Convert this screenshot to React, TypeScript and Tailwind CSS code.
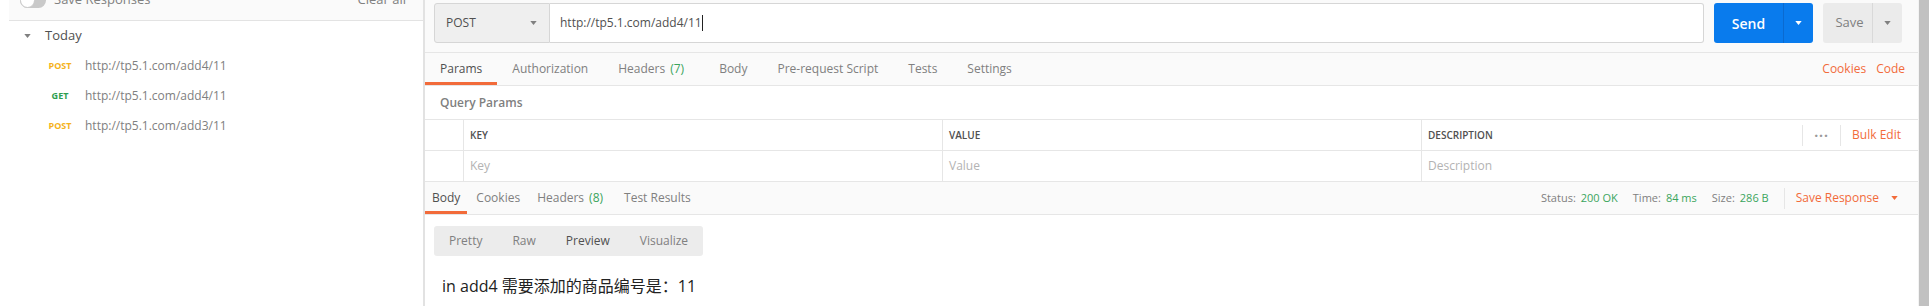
import React from "react";

const Caret = ({ color = "#808080", w = 8, h = 5 }: { color?: string; w?: number; h?: number }) => (
  <svg width={w} height={h} viewBox="0 0 8 5" className="shrink-0">
    <path d="M0 0 L8 0 L4 5 Z" fill={color} />
  </svg>
);

function Sidebar() {
  const items = [
    { m: "POST", c: "text-[#f5b21b]", u: "http://tp5.1.com/add4/11" },
    { m: "GET", c: "text-[#2e9e50]", u: "http://tp5.1.com/add4/11" },
    { m: "POST", c: "text-[#f5b21b]", u: "http://tp5.1.com/add3/11" },
  ];
  return (
    <div className="w-[425px] shrink-0 h-full border-r-2 border-[#e2e2e2] bg-white flex flex-col">
      <div className="ml-[9px] w-[414px] -mt-[20px] h-[41px] shrink-0 bg-[#fafafa] border-b border-[#e3e3e3] flex items-center pl-[11px] pr-[17px] text-[13px] text-[#808080]">
        <div className="w-[26px] h-[15px] rounded-full bg-[#c9c9c9] relative">
          <div className="absolute left-0 top-0 w-[15px] h-[15px] rounded-full bg-white border border-[#c9c9c9]" />
        </div>
        <span className="ml-[8px]">Save Responses</span>
        <span className="ml-auto">Clear all</span>
      </div>
      <div className="h-[30px] flex items-center pl-[24px] text-[13px] text-[#505050]">
        <Caret w={7} h={4} />
        <span className="ml-[14px]">Today</span>
      </div>
      {items.map((it, i) => (
        <div key={i} className="h-[30px] flex items-center pl-[42px]">
          <span className={`w-[36px] text-center text-[9px] font-bold ${it.c}`}>{it.m}</span>
          <span className="ml-[7px] text-[12px] text-[#808080]">{it.u}</span>
        </div>
      ))}
    </div>
  );
}

function Main() {
  const reqTabs = [
    { t: "Params", active: true },
    { t: "Authorization" },
    { t: "Headers", n: "(7)" },
    { t: "Body" },
    { t: "Pre-request Script" },
    { t: "Tests" },
    { t: "Settings" },
  ];
  return (
    <div className="flex-1 min-w-0 h-full flex flex-col">
      {/* URL bar */}
      <div className="h-[53px] shrink-0 bg-[#fafafa] border-b border-[#e6e6e6] flex items-start pt-[3px] pl-[9px] pr-[16px]">
        <div className="w-[116px] h-[40px] bg-[#efefef] border border-[#d6d6d6] rounded-l-[3px] flex items-center justify-between pl-[11px] pr-[12px] text-[12px] text-[#505050]">
          <span>POST</span>
          <Caret w={7} h={4} />
        </div>
        <div className="flex-1 h-[40px] bg-white border border-l-0 border-[#d6d6d6] rounded-r-[3px] flex items-center pl-[10px] text-[12px] text-[#505050]">
          <span>http://tp5.1.com/add4/11</span>
          <span className="w-[1px] h-[16px] bg-[#222]" />
        </div>
        <div className="ml-[10px] w-[99px] h-[40px] rounded-[3px] bg-[#097bed] flex">
          <div className="w-[69px] flex items-center justify-center text-[14px] font-semibold text-white">Send</div>
          <div className="flex-1 border-l border-[#0a6ad0] flex items-center justify-center">
            <Caret color="#ffffff" w={7} h={4} />
          </div>
        </div>
        <div className="ml-[10px] w-[79px] h-[40px] rounded-[3px] bg-[#ebebeb] flex">
          <div className="w-[49px] flex items-center justify-center pl-[4px] text-[13px] text-[#808080]">Save</div>
          <div className="flex-1 border-l border-[#d9d9d9] flex items-center justify-center">
            <Caret color="#808080" w={7} h={4} />
          </div>
        </div>
      </div>

      {/* Request tabs */}
      <div className="h-[33px] shrink-0 bg-[#fafafa] border-b border-[#e6e6e6] flex items-stretch text-[12px]">
        {reqTabs.map((tb) => (
          <div
            key={tb.t}
            className={`flex items-center px-[15px] border-b-[3px] pt-[3px] ${
              tb.active ? "border-[#f26b3a] text-[#505050]" : "border-transparent text-[#808080]"
            } ${tb.t === "Headers" ? "pr-[20px]" : ""}`}
          >
            {tb.t}
            {tb.n && <span className="ml-[5px] text-[#3aa55d]">{tb.n}</span>}
          </div>
        ))}
        <div className="ml-auto flex items-center pr-[13px] text-[#f26b3a] gap-[10px]">
          <span>Cookies</span>
          <span>Code</span>
        </div>
      </div>

      {/* Query Params */}
      <div className="h-[33px] shrink-0 flex items-center pl-[15px] text-[12px] font-semibold text-[#808080]">
        Query Params
      </div>

      {/* Table */}
      <div className="border-t border-[#e6e6e6] shrink-0">
        <div className="h-[31px] flex border-b border-[#e6e6e6] text-[10px] font-semibold text-[#505050]">
          <div className="w-[39px] border-r border-[#e6e6e6]" />
          <div className="w-[479px] border-r border-[#e6e6e6] flex items-center pl-[6px]">KEY</div>
          <div className="w-[479px] border-r border-[#e6e6e6] flex items-center pl-[6px]">VALUE</div>
          <div className="flex-1 flex items-center pl-[6px]">
            <span>DESCRIPTION</span>
            <div className="ml-auto h-[21px] border-l border-[#e6e6e6] flex items-center px-[11px] text-[#9a9a9a] text-[14px] font-bold tracking-[1px] leading-none">
              <span className="-mt-[6px]">...</span>
            </div>
            <div className="h-[21px] border-l border-[#e6e6e6] flex items-center pl-[11px] pr-[17px] text-[12px] font-normal text-[#f26b3a]">
              Bulk Edit
            </div>
          </div>
        </div>
        <div className="h-[31px] flex border-b border-[#e6e6e6] text-[12px] text-[#b3b3b3]">
          <div className="w-[39px] border-r border-[#e6e6e6]" />
          <div className="w-[479px] border-r border-[#e6e6e6] flex items-center pl-[6px]">Key</div>
          <div className="w-[479px] border-r border-[#e6e6e6] flex items-center pl-[6px]">Value</div>
          <div className="flex-1 flex items-center pl-[6px]">Description</div>
        </div>
      </div>

      {/* Response bar */}
      <div className="h-[33px] shrink-0 bg-[#fafafa] border-b border-[#e6e6e6] flex items-stretch text-[12px]">
        <div className="flex items-center px-[7px] border-b-[3px] border-[#f26b3a] pt-[3px] text-[#505050]">Body</div>
        <div className="flex items-center px-[9px] border-b-[3px] border-transparent pt-[3px] text-[#808080]">Cookies</div>
        <div className="flex items-center px-[8px] border-b-[3px] border-transparent pt-[3px] text-[#808080]">
          Headers<span className="ml-[5px] text-[#3aa55d]">(8)</span>
        </div>
        <div className="flex items-center pl-[13px] border-b-[3px] border-transparent pt-[3px] text-[#808080]">Test Results</div>
        <div className="ml-auto flex items-center pr-[20px] text-[11px]">
          <span className="text-[#808080]">Status:</span>
          <span className="ml-[5px] text-[#3aa55d]">200 OK</span>
          <span className="ml-[15px] text-[#808080]">Time:</span>
          <span className="ml-[5px] text-[#3aa55d]">84 ms</span>
          <span className="ml-[15px] text-[#808080]">Size:</span>
          <span className="ml-[5px] text-[#3aa55d]">286 B</span>
          <div className="ml-[15px] h-[21px] border-l border-[#e6e6e6]" />
          <span className="ml-[11px] text-[12px] text-[#f26b3a]">Save Response</span>
          <span className="ml-[12px]">
            <Caret color="#f26b3a" w={7} h={4} />
          </span>
        </div>
      </div>

      {/* Response body */}
      <div className="flex-1 bg-white pl-[9px] pt-[11px]">
        <div className="w-[269px] h-[30px] rounded-[3px] bg-[#ececec] flex items-center text-[12px] text-[#808080]">
          <span className="px-[15px]">Pretty</span>
          <span className="px-[15px]">Raw</span>
          <span className="px-[15px] text-[#505050]">Preview</span>
          <span className="px-[15px]">Visualize</span>
        </div>
        <div className="mt-[19px] pl-[8px] text-[16px] leading-[22px] text-[#222222]">in add4 需要添加的商品编号是：11</div>
      </div>
    </div>
  );
}

export default function App() {
  return (
    <div className="flex w-[1929px] h-[306px] overflow-hidden bg-white font-['Open_Sans','Noto_Sans_CJK_SC',sans-serif] text-[#505050]">
      <Sidebar />
      <Main />
      <div className="w-[11px] h-full shrink-0 bg-[#f3f3f3] flex">
        <div className="ml-[1px] w-[10px] h-full bg-[#c1c1c1]" />
      </div>
    </div>
  );
}
